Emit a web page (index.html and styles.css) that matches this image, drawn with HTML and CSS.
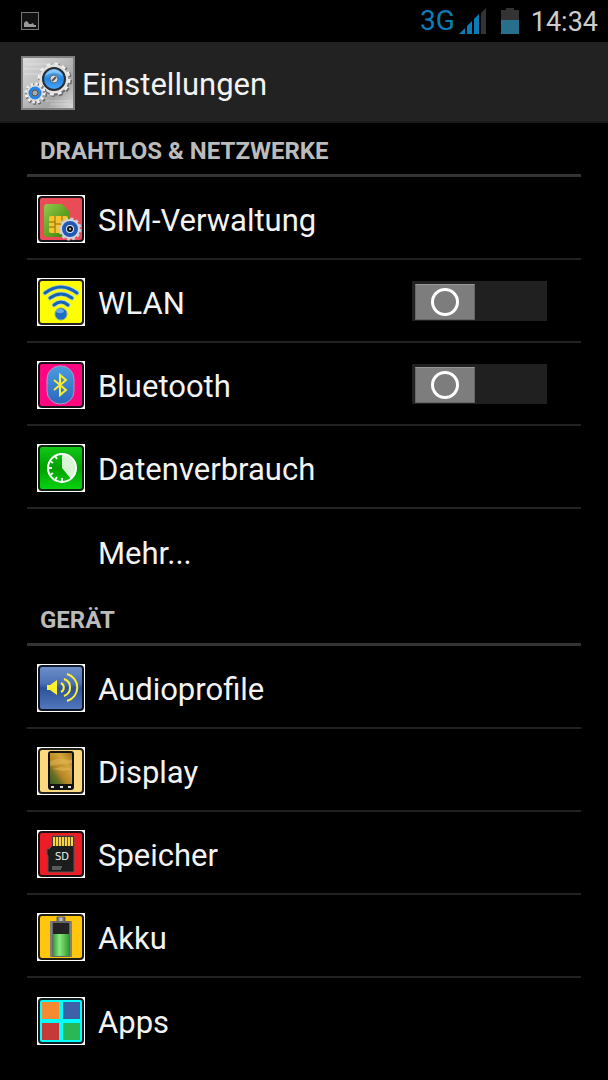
FILE: index.html
```html
<!DOCTYPE html>
<html lang="de">
<head>
	<meta charset="UTF-8">
	<meta name="viewport" content="width=device-width, initial-scale=1">
	<title>Einstellungen</title>
	<link rel="stylesheet" href="styles.css">
</head>
<body>
	<div class="status">
		<svg class="status-pic" viewBox="0 0 18 18">
			<rect x="0.5" y="0.5" width="17" height="17" fill="#111" stroke="#777"/>
			<path d="M3 15v-4l2-2 2 1 1 2h2l2-1 1 2h2v2z" fill="#999"/>
		</svg>
		<div class="status-right">
			<span class="net">3G</span>
			<svg class="signal" viewBox="0 0 27 27">
				<path d="M0 26l6-6v6z" fill="#0a7db8"/>
				<path d="M8 26v-8l5-5v13z" fill="#0a7db8"/>
				<path d="M15 26v-15l5-5v20z" fill="#0a7db8"/>
				<path d="M22 26v-21l5-5v26z" fill="#333"/>
			</svg>
			<svg class="batt" viewBox="0 0 18 26">
				<path d="M0 2h5v-2h8v2h5v24h-18z" fill="#333"/>
				<path d="M0 12h18v14h-18z" fill="#286f8c"/>
			</svg>
			<span class="time">14:34</span>
		</div>
	</div>
	<header class="top">
		<svg class="top-icon" viewBox="0 0 54 54">
			<defs>
				<linearGradient id="metal" x1="0" y1="0" x2="1" y2="1">
					<stop offset="0" stop-color="#ddd"/>
					<stop offset=".45" stop-color="#bbb"/>
					<stop offset=".7" stop-color="#a5a5a5"/>
					<stop offset="1" stop-color="#ddd"/>
				</linearGradient>
				<linearGradient id="blue" x1="0" y1="0" x2="0" y2="1">
					<stop offset="0" stop-color="#6cb8f5"/>
					<stop offset=".5" stop-color="#2386e6"/>
					<stop offset="1" stop-color="#49a8fb"/>
				</linearGradient>
			</defs>
			<rect x="1" y="1" width="52" height="52" fill="url(#metal)" stroke="#808080" stroke-width="2"/>
			<path d="M3 13h28M3 18h17M5 8h24M25 45h24M29 48h20" stroke="#fff" opacity=".35"/>
			<circle cx="34" cy="25" r="13" fill="none" stroke="#6d6d6d" stroke-width="3"/>
			<circle cx="34" cy="24" r="15" fill="none" stroke="#6d6d6d" stroke-width="4" stroke-dasharray="4 3.854"/>
			<circle cx="33" cy="23" r="15" fill="none" stroke="#eee" stroke-width="3" stroke-dasharray="4 3.854"/>
			<circle cx="33" cy="23" r="13" fill="none" stroke="#e2e2e2" stroke-width="3"/>
			<circle cx="33" cy="23" r="11" fill="url(#blue)" stroke="#292e33" stroke-width="2"/>
			<path d="M24 20q9-7 18 0l-1-2q-8-9-16 0z" fill="#add9ff" opacity=".6"/>
			<circle cx="33" cy="23" r="4" fill="#ddd" stroke="#567"/>
			<path d="M31 25l4-4" stroke="#555" stroke-width="2"/>
			<circle cx="15" cy="38" r="9" fill="none" stroke="#6d6d6d" stroke-width="4" stroke-dasharray="2.5 2.212"/>
			<circle cx="14" cy="37" r="9" fill="none" stroke="#eee" stroke-width="3" stroke-dasharray="2.5 2.212"/>
			<circle cx="14" cy="37" r="8" fill="#ddd"/>
			<circle cx="14" cy="37" r="5" fill="#888" stroke="#2584e8" stroke-width="3"/>
			<circle cx="14" cy="37" r="3" fill="#aaa" stroke="#555"/>
		</svg>
		<h1 class="title">Einstellungen</h1>
	</header>
	<main class="list">
		<section class="group">
			<h2 class="group-title">DRAHTLOS &amp; NETZWERKE</h2>
			<ul class="rows">
				<li class="row">
					<a href="#sim" class="row-link">
						<svg class="icon" viewBox="0 0 48 48">
							<defs>
								<linearGradient id="sim-green" x1="0" y1="0" x2="1" y2="1">
									<stop offset="0" stop-color="#92c94c"/>
									<stop offset="1" stop-color="#378000"/>
								</linearGradient>
							</defs>
							<rect width="48" height="48" fill="#fff"/>
							<rect x="2" y="2" width="44" height="44" rx="3" fill="#e94c56" stroke="#15121a" stroke-width="2"/>
							<path d="M7 11l2-2h16l7 7v26h-23l-2-2z" fill="url(#sim-green)"/>
							<rect x="12" y="21" width="19" height="17" rx="2" fill="#f5c52e"/>
							<path d="M12 27h6M12 32h6M18 21v17M25 21v17M18 29h7M25 27h6" stroke="#8b6a05" fill="none"/>
							<circle cx="33" cy="34" r="10" fill="none" stroke="#c8ccd2" stroke-width="3" stroke-dasharray="3 2.236"/>
							<circle cx="33" cy="34" r="10" fill="#d2d5da"/>
							<circle cx="33" cy="34" r="6" fill="#d9e9fb" stroke="#2158b4" stroke-width="4"/>
							<circle cx="33" cy="34" r="3" fill="#111"/>
							<circle cx="33" cy="34" r="1" fill="#ddd"/>
						</svg>
						<span class="name">SIM-Verwaltung</span>
					</a>
				</li>
				<li class="row">
					<svg class="icon" viewBox="0 0 48 48">
						<rect width="48" height="48" fill="#fff"/>
						<rect x="2" y="2" width="44" height="44" rx="3" fill="#ff0" stroke="#222" stroke-width="2"/>
						<g fill="none" stroke-linecap="round">
							<path d="M8 15Q24 3 40 15M13 20Q24 12 35 20M17 27Q24 21 31 27" stroke="#c3d7a8" stroke-width="5"/>
							<path d="M8 15Q24 3 40 15M13 20Q24 12 35 20M17 27Q24 21 31 27" stroke="#1264b8" stroke-width="3"/>
						</g>
						<circle cx="24" cy="36" r="6" fill="#1c6fc4" stroke="#7aa0a5"/>
						<ellipse cx="23" cy="33" rx="4" ry="2" fill="#62a9e5"/>
					</svg>
					<label class="name" for="wlan">WLAN</label>
					<input type="checkbox" id="wlan" class="switch">
				</li>
				<li class="row">
					<svg class="icon" viewBox="0 0 48 48">
						<defs>
							<linearGradient id="bt-blue" x1="0" y1="0" x2="0" y2="1">
								<stop offset="0" stop-color="#4a9cde"/>
								<stop offset="1" stop-color="#2a68bd"/>
							</linearGradient>
						</defs>
						<rect width="48" height="48" fill="#fff"/>
						<rect x="2" y="2" width="44" height="44" rx="3" fill="#ff0780" stroke="#1a1018" stroke-width="2"/>
						<rect x="10" y="5" width="27" height="38" rx="13" fill="url(#bt-blue)" stroke="#a99bc4"/>
						<path d="M17 19l12 10-6 5V14l6 5-12 10" fill="none" stroke="#f8ec35" stroke-width="2"/>
					</svg>
					<label class="name" for="bluetooth">Bluetooth</label>
					<input type="checkbox" id="bluetooth" class="switch">
				</li>
				<li class="row">
					<a href="#daten" class="row-link">
						<svg class="icon" viewBox="0 0 48 48">
							<defs>
								<linearGradient id="data-green" x1="0" y1="0" x2="0" y2="1">
									<stop offset="0" stop-color="#12c91a"/>
									<stop offset=".5" stop-color="#00a000"/>
									<stop offset="1" stop-color="#08d512"/>
								</linearGradient>
							</defs>
							<rect width="48" height="48" fill="#fff"/>
							<rect x="2" y="2" width="44" height="44" rx="3" fill="url(#data-green)" stroke="#0b260b" stroke-width="2"/>
							<path d="M25 24V10a14 14 0 0 1 9 25z" fill="#d8f5d5"/>
							<circle cx="25" cy="24" r="14" fill="none" stroke="#fff" stroke-width="2"/>
							<path d="M11 24h4M13 17l3 2M18 12l2 3M13 31l3-2M18 36l2-3M25 38v-4" fill="none" stroke="#efffee" stroke-width="2"/>
						</svg>
						<span class="name">Datenverbrauch</span>
					</a>
				</li>
				<li class="row">
					<a href="#mehr" class="row-link no-icon">
						<span class="name">Mehr...</span>
					</a>
				</li>
			</ul>
		</section>
		<section class="group">
			<h2 class="group-title">GERÄT</h2>
			<ul class="rows">
				<li class="row">
					<a href="#audio" class="row-link">
						<svg class="icon" viewBox="0 0 48 48">
							<defs>
								<linearGradient id="audio-blue" x1="0" y1="0" x2="0" y2="1">
									<stop offset="0" stop-color="#6e90c9"/>
									<stop offset=".4" stop-color="#4c70b4"/>
									<stop offset=".5" stop-color="#2d529c"/>
									<stop offset="1" stop-color="#5379bd"/>
								</linearGradient>
							</defs>
							<rect width="48" height="48" fill="#fff"/>
							<rect x="2" y="2" width="44" height="44" rx="3" fill="url(#audio-blue)" stroke="#101626" stroke-width="2"/>
							<path d="M10 21h3l7-5v15l-7-5h-3z" fill="#fff12d"/>
							<path d="M24 19a5 5 0 0 1 0 9M27 15a9 9 0 0 1 0 17M30 10a14 14 0 0 1 0 27" fill="none" stroke="#fff12d" stroke-width="2"/>
						</svg>
						<span class="name">Audioprofile</span>
					</a>
				</li>
				<li class="row">
					<a href="#display" class="row-link">
						<svg class="icon" viewBox="0 0 48 48">
							<defs>
								<linearGradient id="screen" x1="0" y1="1" x2="1" y2="0">
									<stop offset="0" stop-color="#355e20"/>
									<stop offset=".25" stop-color="#6b7027"/>
									<stop offset=".4" stop-color="#b78624"/>
									<stop offset=".7" stop-color="#d3a63b"/>
									<stop offset="1" stop-color="#a57018"/>
								</linearGradient>
							</defs>
							<rect width="48" height="48" fill="#fff"/>
							<rect x="2" y="2" width="44" height="44" rx="3" fill="#fcd981" stroke="#211e18" stroke-width="2"/>
							<rect x="11" y="4" width="26" height="39" rx="3" fill="#111"/>
							<rect x="13" y="6" width="22" height="31" fill="url(#screen)"/>
							<path d="M13 14l8-2 14 1v3l-10 1-12 2zM15 22l9-2 11 2-9 2z" fill="#edc766" opacity=".4"/>
							<path d="M14 40h3M23 40h3M31 40h3" stroke="#ddd" stroke-width="2"/>
						</svg>
						<span class="name">Display</span>
					</a>
				</li>
				<li class="row">
					<a href="#speicher" class="row-link">
						<svg class="icon" viewBox="0 0 48 48">
							<rect width="48" height="48" fill="#fff"/>
							<rect x="2" y="2" width="44" height="44" rx="3" fill="#ee1c24" stroke="#1d1012" stroke-width="2"/>
							<path d="M15 6h22v36H11V26l-1-2v-5h2l3-3z" fill="#1b1d1d" stroke="#555"/>
							<path d="M16 7h20v9H16z" fill="#6b5520"/>
							<path d="M17 7v9M20 7v9M23 7v9M26 7v9M29 7v9M32 7v9M35 7v9" stroke="#f5d24a" stroke-width="2"/>
							<text x="25" y="30" class="sd">SD</text>
							<path d="M15 37h10M15 39h9" stroke="#999"/>
						</svg>
						<span class="name">Speicher</span>
					</a>
				</li>
				<li class="row">
					<a href="#akku" class="row-link">
						<svg class="icon" viewBox="0 0 48 48">
							<defs>
								<linearGradient id="case">
									<stop offset="0" stop-color="#555"/>
									<stop offset=".5" stop-color="#ccc"/>
									<stop offset="1" stop-color="#444"/>
								</linearGradient>
								<linearGradient id="charge">
									<stop offset="0" stop-color="#2f9e2c"/>
									<stop offset=".4" stop-color="#8be682"/>
									<stop offset="1" stop-color="#2f9e2c"/>
								</linearGradient>
							</defs>
							<rect width="48" height="48" fill="#fff"/>
							<rect x="2" y="2" width="44" height="44" rx="3" fill="#ffc60b" stroke="#211e12" stroke-width="2"/>
							<path d="M20 4h8v5h-8z" fill="url(#case)" stroke="#666"/>
							<rect x="13" y="8" width="22" height="36" fill="#666"/>
							<path d="M14 8v36M34 8v36" stroke="#999"/>
							<rect x="16" y="10" width="16" height="11" fill="#222"/>
							<rect x="16" y="21" width="16" height="22" fill="url(#charge)"/>
						</svg>
						<span class="name">Akku</span>
					</a>
				</li>
				<li class="row">
					<a href="#apps" class="row-link">
						<svg class="icon" viewBox="0 0 48 48">
							<rect width="48" height="48" fill="#fff"/>
							<rect x="2" y="2" width="44" height="44" rx="3" fill="#0ff" stroke="#111c1e" stroke-width="2"/>
							<rect x="5" y="5" width="17" height="17" fill="#f58a33"/>
							<rect x="26" y="5" width="17" height="17" fill="#3e60a8"/>
							<rect x="5" y="26" width="17" height="17" fill="#c53937"/>
							<rect x="26" y="26" width="17" height="17" fill="#28b956"/>
						</svg>
						<span class="name">Apps</span>
					</a>
				</li>
			</ul>
		</section>
	</main>
</body>
</html>
```
FILE: styles.css
```css
*{
	margin: 0;
	padding: 0;
	box-sizing: border-box;
}
body{
	background-color: #000;
	color: #f3f3f3;
	font-family: Roboto, "Noto Sans", sans-serif;
}
ul{
	list-style: none;
}
a{
	color: inherit;
	text-decoration: none;
}
svg{
	display: block;
	flex: none;
}
/* status bar */
.status{
	display: flex;
	align-items: center;
	justify-content: space-between;
	height: 42px;
	padding: 0 10px 0 21px;
}
.status-pic{
	width: 18px;
	height: 18px;
}
.status-right{
	display: flex;
	align-items: center;
}
.net{
	margin-right: 4px;
	color: #0a7db8;
	font-family: "Liberation Sans Narrow", Roboto, sans-serif;
	font-size: 28px;
	line-height: 40px;
}
.signal{
	width: 27px;
	height: 27px;
	margin-right: 15px;
}
.batt{
	width: 18px;
	height: 26px;
	margin-right: 12px;
}
.time{
	padding-top: 2px;
	color: #ccc;
	font-size: 27px;
	line-height: 40px;
}
/* title bar */
.top{
	display: flex;
	align-items: center;
	gap: 7px;
	height: 81px;
	padding: 2px 21px 0;
	background-color: #222;
	border-bottom: 2px solid #191919;
}
.top-icon{
	width: 54px;
	height: 54px;
}
.title{
	padding-top: 4px;
	font-size: 31px;
	font-weight: 400;
	line-height: 40px;
}
/* list */
.list{
	padding: 0 27px;
}
.group-title{
	height: 54px;
	padding: 12px 13px 0;
	border-bottom: 3px solid #333;
	color: #bbb;
	font-size: 24px;
	font-weight: 700;
	line-height: 32px;
}
.row{
	display: flex;
	align-items: center;
	height: 83px;
	padding: 2px 34px 0 10px;
	border-bottom: 2px solid #222;
}
.row:last-child{
	border-bottom: 0;
}
.row-link{
	display: flex;
	flex: 1;
	align-items: center;
}
.no-icon{
	padding-left: 48px;
}
.icon{
	width: 48px;
	height: 48px;
}
.name{
	flex: 1;
	padding: 4px 0 0 13px;
	font-size: 31px;
	line-height: 40px;
}
.sd{
	fill: #eee;
	font-family: "DejaVu Sans", sans-serif;
	font-size: 10px;
	text-anchor: middle;
}
.switch{
	display: grid;
	grid-template-columns: 60px;
	align-items: center;
	justify-content: start;
	width: 135px;
	height: 40px;
	margin-bottom: 2px;
	padding: 3px;
	background-color: #202020;
	appearance: none;
}
.switch::before,
.switch::after{
	content: "";
	grid-area: 1 / 1;
}
.switch::before{
	height: 34px;
	background-color: #7d7d7d;
	border: 1px solid #666;
	border-top-color: #999;
}
.switch::after{
	justify-self: center;
	width: 22px;
	height: 22px;
	border: 3px solid #fff;
	border-radius: 50%;
}
.switch:checked{
	justify-content: end;
}
```
